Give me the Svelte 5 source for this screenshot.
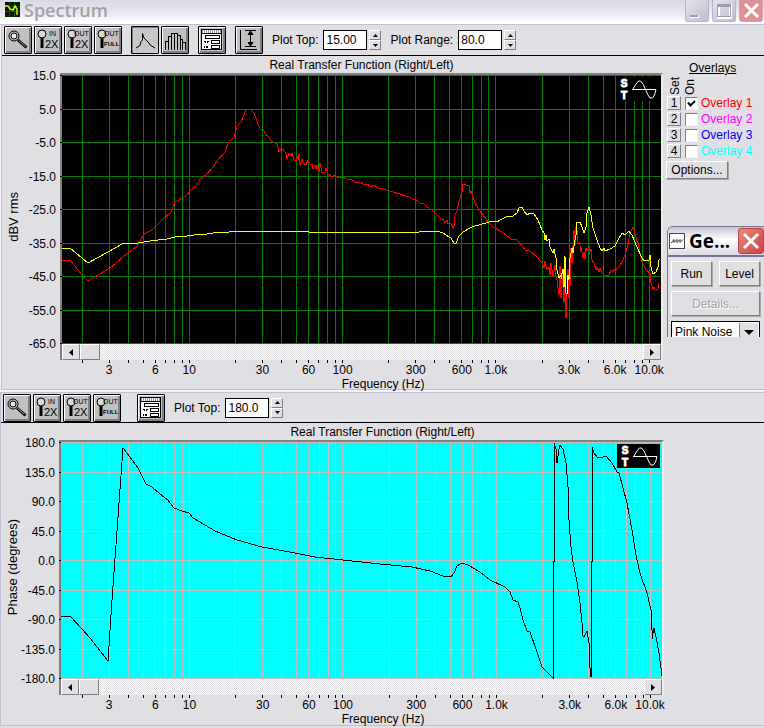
<script lang="ts">
  type Trace = { color: string; points: string };
  type Chart = {
    logMin: number;
    logMax: number;
    height: number;
    view: string;
    yTitle: string;
    yLabels: string[];
    traces: Trace[];
  };

  const gain: Chart = {
    logMin: 0.1696,
    logMax: 4.077,
    height: 269,
    view: '62 75 599 269',
    yTitle: 'dBV rms',
    yLabels: ['15.0', '5.0', '-5.0', '-15.0', '-25.0', '-35.0', '-45.0', '-55.0', '-65.0'],
    traces: [
      {
        color: '#ff0000',
        points:
          '62,260 70,260 82,275 88,281 110,268 123,257 137,246 144,234 152,230 156,226 162,220 171,212 175,202 186,196 190,191 197,185 200,179 206,175 213,167 217,161 225,152 229,141 234,138 237,126 241,122 246,110 250,109 254,113 257,121 260,129 263,129 266,135 268,136 271,141 277,144 279,152 281,149 283,149 286,154 287,159 289,153 291,156 292,153 294,160 296,161 298,156 298,160 299,154 300,165 302,159 303,163 306,165 308,160 310,164 312,164 313,169 315,165 316,169 317,165 319,172 320,163 322,173 325,172 326,168 328,174 332,177 334,175 337,177 341,178 344,177 348,180 351,179 355,182 360,182 363,184 368,184 370,187 375,185 377,188 383,189 387,190 393,192 400,194 405,196 410,197 415,200 417,200 421,204 423,203 427,207 432,210 436,214 439,217 442,220 443,219 445,223 447,220 448,224 451,223 453,228 454,226 455,215 457,211 459,201 462,192 463,184 469,186 470,193 471,191 475,203 480,211 483,215 489,223 493,227 502,232 511,239 516,239 520,243 525,250 530,251 537,257 542,263 544,268 545,261 547,270 549,267 550,275 551,263 553,277 555,265 556,277 557,280 559,295 560,266 561,298 563,275 564,303 565,266 565,317 566,318 567,293 568,269 569,298 569,263 570,287 571,248 572,263 574,230 575,245 576,227 577,231 578,242 580,245 581,252 581,248 583,258 584,252 585,259 586,248 587,251 589,248 589,255 591,249 592,260 594,263 596,270 597,267 599,272 600,268 602,273 604,275 609,275 611,270 613,272 615,269 615,272 617,268 620,265 622,262 625,255 628,245 630,233 633,227 636,237 639,248 642,262 646,270 650,273 651,283 653,289 654,287 655,289 658,289 659,283'
      },
      {
        color: '#ffff00',
        points:
          '62,248 70,248 88,263 108,252 122,244 138,243 150,241 167,239 175,237 187,236 194,235 207,234 213,233 229,232 262,231 308,231 309,232 419,232 420,231 432,231 440,232 443,233 449,237 451,238 454,243 456,243 459,236 463,232 472,227 482,224 493,221 497,222 502,219 508,216 513,216 517,213 519,208 522,207 524,211 527,215 530,213 534,214 538,220 542,230 544,233 545,240 546,235 547,241 549,239 550,247 553,253 554,249 556,258 557,270 559,278 561,275 561,279 563,269 564,287 565,256 566,293 567,294 568,275 569,280 570,258 572,248 573,253 575,240 576,235 577,222 580,222 582,227 584,233 586,227 587,213 589,207 591,215 593,228 597,240 600,248 602,251 604,248 605,251 610,249 615,246 618,240 622,233 625,235 629,231 632,235 637,247 642,258 644,261 647,260 649,260 650,255 651,267 653,274 656,272 658,267 659,260 660,259'
      }
    ]
  };

  const phase: Chart = {
    logMin: 0.1634,
    logMax: 4.078,
    height: 237,
    view: '61 442 601 237',
    yTitle: 'Phase (degrees)',
    yLabels: ['180.0', '135.0', '90.0', '45.0', '0.0', '-45.0', '-90.0', '-135.0', '-180.0'],
    traces: [
      {
        color: '#000000',
        points:
          '61,616 70,616 82,629 90,638 108,661 112,600 123,448 130,457 138,468 146,484 152,487 160,494 168,500 174,508 182,511 189,513 193,518 205,525 215,531 237,540 262,547 290,552 315,557 343,560 380,564 412,567 430,571 443,576 451,577 454,573 457,566 462,563 468,565 480,572 490,580 505,587 510,592 513,600 518,602 520,608 523,620 527,631 530,632 537,652 542,667 548,673 553,678 553,561 554,561 554,443 556,449 557,463 559,449 560,445 563,449 566,463 568,487 569,520 571,547 573,562 577,582 580,603 582,623 583,636 584,637 587,631 589,643 590,668 591,677 591,561 592,561 592,447 594,453 597,457 603,457 606,456 612,463 617,472 619,473 627,503 632,530 636,555 640,573 647,593 651,610 652,630 652,639 654,628 656,637 659,653 662,676'
      }
    ]
  };

  const ticks: number[] = [];
  for (const decade of [1, 10, 100, 1000]) {
    for (let n = 1; n < 10; n++) if (decade * n > 1) ticks.push(decade * n);
  }
  ticks.push(10000);

  const xLabels: [number, string][] = [
    [3, '3'], [6, '6'], [10, '10'], [30, '30'], [60, '60'], [100, '100'],
    [300, '300'], [600, '600'], [1000, '1.0k'], [3000, '3.0k'], [6000, '6.0k'], [10000, '10.0k']
  ];

  const xPercent = (c: Chart, f: number) =>
    `${(((Math.log10(f) - c.logMin) / (c.logMax - c.logMin)) * 100).toFixed(3)}%`;
  const yPos = (c: Chart, i: number) => Math.round((i * (c.height - 1)) / 8) + 0.5;

  let plotTop = $state('15.00');
  let plotRange = $state('80.0');
  let phaseTop = $state('180.0');
  let overlays = $state([
    { n: 1, color: '#ff0000', on: true },
    { n: 2, color: '#ff00ff', on: false },
    { n: 3, color: '#0000ff', on: false },
    { n: 4, color: '#00ffff', on: false }
  ]);
</script>

{#snippet magnifier()}
  <button class="tool" aria-label="Zoom">
    <svg width="24" height="24" viewBox="0 0 24 24" fill="none" stroke="#000">
      <circle cx="8" cy="8" r="5" />
      <circle cx="8" cy="8" r="3" fill="#e8e8e8" />
      <path d="M12 12l8.500 7.500" stroke-width="3" />
      <path d="M13 12.500l6.500 6" stroke="#aaa" />
    </svg>
  </button>
{/snippet}

{#snippet zoomTool(top: string, bottom: string, label: string)}
  <button class="tool" aria-label={label}>
    <svg width="24" height="24" viewBox="0 0 24 24" fill="none" stroke="#000">
      <circle cx="6" cy="6" r="4" fill="#d8d8d8" />
      <path d="M6 10v10" stroke-width="3" />
      <text x={top === 'IN' ? 13 : 8} y="8" font-size="7" fill="#000" stroke="none">{top}</text>
      {#if bottom === '2X'}
        <text x="9" y="20" font-size="11" fill="#000" stroke="none">{bottom}</text>
      {:else}
        <text x="8" y="18" font-size="6" fill="#000" stroke="none" font-weight="bold">{bottom}</text>
      {/if}
    </svg>
  </button>
{/snippet}

{#snippet zoomTools()}
  <div class="tools">
    {@render magnifier()}
    {@render zoomTool('IN', '2X', 'Zoom in 2X')}
    {@render zoomTool('OUT', '2X', 'Zoom out 2X')}
    {@render zoomTool('OUT', 'FULL', 'Zoom out full')}
  </div>
{/snippet}

{#snippet formTool()}
  <button class="tool" aria-label="Settings">
    <svg width="24" height="24" viewBox="0 0 24 24" fill="none" stroke="#000" shape-rendering="crispEdges">
      <rect x="1.500" y="1.500" width="20" height="20" fill="#fff" />
      <path d="M2 3.500h19" stroke="#999" stroke-width="3" stroke-dasharray="1 1" />
      <path d="M2 5.500h19" />
      <rect x="5.500" y="7.500" width="14" height="3" />
      <rect x="11.500" y="12.500" width="8" height="3" />
      <rect x="11.500" y="17.500" width="8" height="3" />
      <path d="M4 13.500h2m1 0h2M5 14.500h1m1 0h1M4 18.500h1m1 0h2M4 19.500h1m1 0h2" />
    </svg>
  </button>
{/snippet}

{#snippet spinner(name: string)}
  <span class="spinner">
    <button aria-label="Increase {name}"><svg width="5" height="3"><path d="M2.500 0L5 3H0z" /></svg></button>
    <button aria-label="Decrease {name}"><svg width="5" height="3"><path d="M2.500 3L5 0H0z" /></svg></button>
  </span>
{/snippet}

{#snippet plot(c: Chart, kind: string)}
  <div class="chart {kind}">
    <div class="y-title"><span>{c.yTitle}</span></div>
    <div class="y-labels">
      {#each c.yLabels as label}<span>{label}</span>{/each}
    </div>
    <div class="plot">
      <div class="screen">
        <svg class="field" width="100%" height={c.height} shape-rendering="crispEdges">
          {#each ticks as f}
            <line class="grid" x1={xPercent(c, f)} x2={xPercent(c, f)} y1="0" y2="100%" />
          {/each}
          {#each c.yLabels as _, i}
            <line class="grid" x1="0" x2="100%" y1={yPos(c, i)} y2={yPos(c, i)} />
            <line x1="-2" x2="0" y1={yPos(c, i)} y2={yPos(c, i)} stroke="#000" />
          {/each}
          <svg width="100%" height="100%" viewBox={c.view} preserveAspectRatio="none">
            {#each c.traces as t}
              <polyline points={t.points} fill="none" stroke={t.color} vector-effect="non-scaling-stroke" />
            {/each}
          </svg>
        </svg>
        <svg class="badge" width="43" height="24" viewBox="0 0 43 24" fill="none" stroke="#fff">
          <text x="8" y="10" text-anchor="middle">S</text>
          <text x="8" y="22" text-anchor="middle">T</text>
          <path d="M16 12.500h24M17 12L20 7l2.500-3h2L27 7l5 11 2 3h2.500l2-3 1.500-5.500" />
        </svg>
      </div>
      <div class="scroll">
        <button aria-label="Scroll left"><svg width="4" height="7"><path d="M4 0v7L0 3.500z" /></svg></button>
        <input type="range" min="0" max="100" value="0" aria-label="{c.yTitle} scroll position" />
        <button aria-label="Scroll right"><svg width="4" height="7"><path d="M0 0v7L4 3.500z" /></svg></button>
      </div>
    </div>
    <svg class="x-axis" width="100%" height="30">
      {#each ticks as f}
        <line x1={xPercent(c, f)} x2={xPercent(c, f)} y1="0" y2="3" stroke="#000" shape-rendering="crispEdges" />
      {/each}
      {#each xLabels as [f, label]}
        <text x={xPercent(c, f)} y="14" text-anchor="middle">{label}</text>
      {/each}
      <text x="53.6%" y="28" text-anchor="middle">Frequency (Hz)</text>
    </svg>
  </div>
{/snippet}

<main>
  <header>
    <svg class="app-icon" width="15" height="15" viewBox="0 0 15 15" fill="none">
      <rect width="15" height="15" fill="#061806" />
      <path d="M0 4.500h15M0 9.500h15M4.500 0v15M9.500 0v15" stroke="#005a00" />
      <path d="M0 4h3l2 3 3 1 2-4 2 3v6" stroke="#e8e800" stroke-width="1.500" />
    </svg>
    <h1>Spectrum</h1>
    <div class="caption">
      <button aria-label="Minimize"><svg width="22" height="20"><path d="M4 15.500h9" stroke="#fff" stroke-width="3" /><path d="M4 15h8" stroke="#9c9cac" stroke-width="2" /></svg></button>
      <button aria-label="Maximize"><svg width="22" height="20" fill="none"><rect x="5.500" y="4.500" width="12" height="12" stroke="#fff" stroke-width="3" /><rect x="4.500" y="3.500" width="13" height="12" stroke="#9c9cac" /><path d="M5 5h12" stroke="#9c9cac" stroke-width="2" /></svg></button>
      <button class="close" aria-label="Close"><svg width="22" height="20"><path d="M5 3l13 13M18 3L5 16" stroke="#fff" stroke-width="3" /></svg></button>
    </div>
  </header>

  <section class="panel first">
    <div class="toolbar">
      {@render zoomTools()}
      <div class="tools">
        <button class="tool pressed" aria-label="Line view">
          <svg width="24" height="24" fill="none" stroke="#000"><path d="M3 20l4-2.500 1-4 1.500-1.500V5.500L11 10l2 2 3 3 1 2 5 3" /></svg>
        </button>
        <button class="tool" aria-label="Bar view">
          <svg width="24" height="24" fill="none" stroke="#000" shape-rendering="crispEdges"><path d="M2.500 22v-8.500h3V22M5.500 15V8.500h3V22M8.500 9V5.500h3V22M11.500 5.500h3V22M14.500 7.500h3V22M17.500 11.500h2V22M19.500 14.500h3V22" /></svg>
        </button>
      </div>
      <div class="tools">{@render formTool()}</div>
      <div class="tools">
        <button class="tool" aria-label="Scale to fit">
          <svg width="24" height="24" fill="none" stroke="#000"><path d="M3.500 2v19.500H20M8 2.500h11M13.500 3v15M8 18.500h11" /><path d="M11 6.500L13.500 3 16 6.500zM11 14.500l2.500 3.500 2.500-3.500z" fill="#000" /></svg>
        </button>
      </div>
      <div class="field-group">
        <label for="plot-top">Plot Top:</label>
        <input id="plot-top" type="text" bind:value={plotTop} />
        {@render spinner('plot top')}
      </div>
      <div class="field-group">
        <label for="plot-range">Plot Range:</label>
        <input id="plot-range" type="text" bind:value={plotRange} />
        {@render spinner('plot range')}
      </div>
    </div>
    <div class="body">
      <div class="main">
        <h2>Real Transfer Function (Right/Left)</h2>
        {@render plot(gain, 'gain')}
      </div>
      <aside>
        <h3>Overlays</h3>
        <div class="heads"><span>Set</span><span>On</span></div>
        {#each overlays as o}
          <div class="overlay">
            <button aria-label="Set overlay {o.n}">{o.n}</button>
            <input id="overlay-{o.n}" type="checkbox" bind:checked={o.on} />
            <label for="overlay-{o.n}" style="color: {o.color}">Overlay {o.n}</label>
          </div>
        {/each}
        <button class="raised options">Options...</button>

        <div class="generator">
          <div class="gen-title">
            <svg width="16" height="16" fill="none"><rect x="0.500" y="0.500" width="15" height="15" fill="#fff" stroke="#444" /><path d="M2 9.500h1l2-3v3l3-3v3l3-3v3l3-3" stroke="#333" /></svg>
            <strong>Ge...</strong>
            <button class="close" aria-label="Close generator"><svg width="24" height="24"><path d="M5 5l14 14M19 5L5 19" stroke="#fff" stroke-width="3" /></svg></button>
          </div>
          <div class="gen-body">
            <div class="gen-row">
              <button class="raised">Run</button>
              <button class="raised">Level</button>
            </div>
            <button class="raised" disabled>Details...</button>
            <div class="clip">
              <select aria-label="Signal type"><option>Pink Noise</option></select>
              <svg class="drop" width="18" height="20"><path d="M4 7h10l-5 5z" /></svg>
            </div>
          </div>
        </div>
      </aside>
    </div>
  </section>

  <section class="panel second">
    <div class="toolbar">
      {@render zoomTools()}
      <div class="tools">{@render formTool()}</div>
      <div class="field-group">
        <label for="phase-top">Plot Top:</label>
        <input id="phase-top" type="text" bind:value={phaseTop} />
        {@render spinner('phase plot top')}
      </div>
    </div>
    <h2>Real Transfer Function (Right/Left)</h2>
    <div class="body">
      <div class="main">{@render plot(phase, 'phase')}</div>
      <div class="spacer"></div>
    </div>
  </section>
</main>

<style>
  :global(body) {
    margin: 0;
    background: #e0dfe3;
  }
  main {
    font: 12px/14px 'Liberation Sans', Arial, sans-serif;
    color: #000;
    background: #f4f4fa;
  }
  button, input, select {
    font: inherit;
    color: inherit;
    margin: 0;
    padding: 0;
    box-sizing: border-box;
    border-radius: 0;
  }
  svg { display: block; }

  header {
    display: flex;
    align-items: flex-start;
    height: 24px;
    padding-left: 5px;
    background: linear-gradient(#dadae6, #e6e6ee 50%, #ffffff 90%);
    border-bottom: 1px solid #c0c0d2;
  }
  .app-icon { margin-top: 2px; }
  h1 {
    flex: 1;
    margin: 0 0 0 4px;
    font: 600 18px/21px 'Open Sans', 'Noto Sans', sans-serif;
    color: #a0a0a4;
  }
  .caption { display: flex; gap: 3px; padding-right: 1px; }
  .caption button {
    width: 24px;
    height: 22px;
    border: 1px solid #b4b4c6;
    border-top: 0;
    border-radius: 0 0 3px 3px;
    background: linear-gradient(135deg, #e4e4ee, #bcbccc);
  }
  .caption .close { background: #dc9294; border-color: #d8a4a8; }

  .panel {
    background: #e0dfe3;
    border-left: 1px solid #c0c0d2;
    border-bottom: 1px solid #c0c0d2;
  }
  .first { margin-left: 1px; }
  .second { margin-top: 2px; }

  .toolbar {
    display: flex;
    align-items: center;
    gap: 9px;
    height: 30px;
    padding-left: 2px;
    border-bottom: 1px solid #000;
  }
  .tools { display: flex; gap: 2px; }
  .second .toolbar { border-top: 1px solid #c0c0d2; height: 29px; }
  .second .tools + .tools { margin-left: 7px; }
  .tool {
    width: 28px;
    height: 28px;
    border: 1px solid #000;
    border-radius: 1px;
    background: #c0c0c0;
    box-shadow: inset 1px 1px #fff, inset -2px -2px #808080;
    padding: 1px;
  }
  .pressed { background: #c8c8c8; box-shadow: inset 1px 1px #808080; }
  .field-group { display: flex; align-items: center; }
  .field-group input {
    width: 44px;
    height: 20px;
    margin: 0 2px 0 5px;
    padding-left: 2px;
    border: 1px solid #000;
    background: #fff;
  }
  .spinner { display: flex; flex-direction: column; }
  .spinner button {
    display: flex;
    align-items: center;
    justify-content: center;
    width: 12px;
    height: 10px;
    border: 1px solid;
    border-color: #fff #808080 #808080 #fff;
    background: #e0dfe3;
  }

  h2 {
    box-sizing: border-box;
    height: 17px;
    margin: 0;
    padding-top: 2px;
    font-size: 12px;
    font-weight: normal;
    line-height: 15px;
    text-align: center;
  }
  .first h2 { padding-left: 58px; }
  .body { display: flex; align-items: flex-start; }
  .main { flex: 1; min-width: 0; }
  .spacer { width: 100px; }

  .chart {
    display: grid;
    grid-template-columns: 24px 34px minmax(0, 1fr);
  }
  .y-title { display: flex; align-items: center; justify-content: center; }
  .y-title span {
    font-size: 13px;
    writing-mode: vertical-rl;
    transform: rotate(180deg);
  }
  .y-labels {
    display: flex;
    flex-direction: column;
    justify-content: space-between;
    align-items: flex-end;
    padding-right: 4px;
    margin: -4px 0 9px;
    white-space: nowrap;
  }
  .plot {
    border: 2px solid #808080;
    border-right-color: #ececec;
    border-bottom: 0;
  }
  .screen { position: relative; }
  .field { overflow: visible; }
  .gain .field { background: #000; }
  .phase .field { background: #00ffff; }
  .gain .grid { stroke: #008000; }
  .phase .grid { stroke: #c0c0c0; }
  .badge { position: absolute; top: 2px; right: 2px; background: #000; }
  .badge text { fill: #fff; stroke: #fff; font-size: 10px; font-weight: bold; }
  .scroll {
    display: flex;
    height: 16px;
    background: repeating-conic-gradient(#fff 0 25%, #dcdcdf 0 50%) 0 0 / 2px 2px;
  }
  .scroll button {
    display: flex;
    align-items: center;
    justify-content: center;
    width: 18px;
    border: 1px solid;
    border-color: #fff #808080 #808080 #fff;
    background: #e0dfe3;
  }
  .scroll input {
    flex: 1;
    min-width: 0;
    height: 16px;
    appearance: none;
    background: none;
  }
  .scroll input::-webkit-slider-thumb {
    appearance: none;
    box-sizing: border-box;
    width: 20px;
    height: 16px;
    border: 1px solid;
    border-color: #fff #808080 #808080 #fff;
    background: #e0dfe3;
  }
  .x-axis {
    grid-column: 3;
    box-sizing: border-box;
    height: 29px;
    padding: 0 2px;
    overflow: visible;
  }
  .phase .x-axis { height: 30px; }

  aside {
    width: 101px;
    box-sizing: border-box;
    padding: 5px 0 0 4px;
  }
  h3 {
    margin: 0 28px 0 22px;
    font-size: 12px;
    font-weight: normal;
    line-height: 14px;
    text-decoration: underline;
  }
  .heads { display: flex; gap: 1px; height: 20px; align-items: flex-end; padding-left: 1px; }
  .heads span { writing-mode: vertical-rl; transform: rotate(180deg); }
  .overlay { display: flex; align-items: center; height: 16px; }
  .overlay button {
    width: 14px;
    height: 14px;
    line-height: 12px;
    border: 1px solid;
    border-color: #fff #808080 #808080 #fff;
    background: #e0dfe3;
  }
  .overlay input {
    appearance: none;
    width: 13px;
    height: 13px;
    margin: 0 3px 0 4px;
    border: 1px solid;
    border-color: #808080 #f4f4e8 #f4f4e8 #808080;
    background: #fff;
  }
  .overlay input:checked {
    background: #fff url("data:image/svg+xml,%3Csvg xmlns='http://www.w3.org/2000/svg' width='11' height='11'%3E%3Cpath d='M2 4.500l2.500 3L9 3' fill='none' stroke='%23000' stroke-width='2'/%3E%3C/svg%3E") center no-repeat;
  }
  .overlay label { white-space: nowrap; }
  .raised {
    border: 1px solid;
    border-color: #fff #808080 #808080 #fff;
    box-shadow: 1px 1px #a8a8a0;
    background: #e0dfe3;
  }
  .options { display: block; width: 62px; height: 18px; margin: 2px 0 0 -1px; }

  .generator {
    margin-top: 47px;
    border: solid #75758f;
    border-width: 1px 0 0 1px;
    border-radius: 6px 0 0 0;
    overflow: hidden;
  }
  .gen-title {
    display: flex;
    align-items: center;
    height: 28px;
    padding-left: 1px;
    background: linear-gradient(#c4c4d4, #ffffff 45%, #dadae6);
    border-bottom: 2px solid #75758f;
  }
  .gen-title strong { flex: 1; margin-left: 4px; font: 700 19px/24px 'Open Sans', 'Noto Sans', sans-serif; }
  .gen-title button {
    width: 26px;
    height: 26px;
    border: 1px solid #c04040;
    border-radius: 3px;
    background: linear-gradient(135deg, #e88880, #cc4444);
  }
  .gen-body { display: flex; flex-direction: column; gap: 5px; padding: 4px 4px 0 3px; }
  .gen-row { display: flex; gap: 7px; }
  .gen-row button { flex: 1; }
  .gen-body .raised { height: 25px; }
  .gen-body .raised:disabled { color: #a4a4a4; text-shadow: 1px 1px #fff; }
  .clip { position: relative; height: 16px; overflow: hidden; }
  select {
    appearance: none;
    display: block;
    width: 100%;
    height: 22px;
    padding-left: 3px;
    border: 1px solid #000;
    background: #fff;
  }
  .drop {
    position: absolute;
    top: 2px;
    right: 2px;
    background: #e0dfe3;
    border-left: 1px solid #808080;
    pointer-events: none;
  }
  text { font-family: 'Liberation Sans', Arial, sans-serif; }
</style>
